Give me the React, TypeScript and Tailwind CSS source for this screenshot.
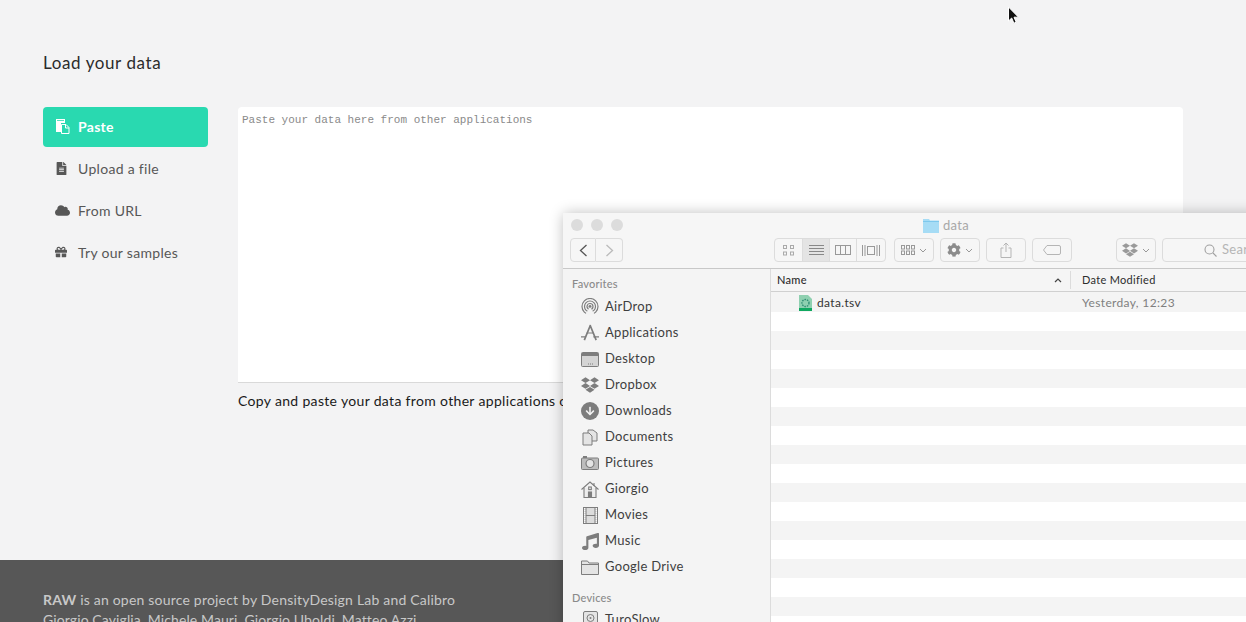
import React from "react";
import { FaFileAlt, FaCloud, FaGift, FaCog, FaDropbox, FaArrowDown, FaMusic } from "react-icons/fa";

const g = "#7d7d7d";

function PasteIcon() {
  return (
    <svg width="15" height="15" viewBox="0 0 15 15">
      <path d="M1 0h9v4H6v9H1z" fill="#fff" />
      <path d="M2 1.500h7" stroke="#29d9b0" strokeWidth=".8" />
      <path d="M6.500 5.500h4.500l3 3v6h-7.500z" fill="#29d9b0" stroke="#fff" strokeWidth="1" />
      <path d="M10.500 5.500v3.500h3.500" fill="none" stroke="#fff" strokeWidth="1" />
    </svg>
  );
}

function NavItem({ icon, label, active }: { icon: React.ReactNode; label: string; active?: boolean }) {
  return (
    <div className={active ? "flex h-10 items-center rounded-sm bg-[#29d9b0] pb-[2px] pl-[12px] font-bold text-white" : "flex h-10 items-center rounded-sm pb-[2px] pl-[12px] text-[#575757]"}>
      <span className="flex w-[23px] items-center">{icon}</span>
      <span className="text-[14px] tracking-[0.3px]">{label}</span>
    </div>
  );
}

const AirDrop = () => (
  <svg width="18" height="18" viewBox="0 0 18 18" fill="none" stroke={g} strokeWidth="1.2">
    <circle cx="9" cy="8.500" r="8" />
    <circle cx="9" cy="8.500" r="5.500" />
    <circle cx="9" cy="8.500" r="3" />
    <circle cx="9" cy="8.500" r="1" fill={g} />
    <path d="M4 17 9 9l5 8z" fill="#f3f3f3" stroke="none" />
  </svg>
);
const Apps = () => (
  <svg width="19" height="18" viewBox="0 0 19 18" fill="none" stroke={g} strokeWidth="1.8">
    <path d="M10 .5 3.500 16.500M9.500 .5 16 16.500" />
    <path d="M0 13h5M13 13h6M6 9h7" strokeWidth="1.3" />
  </svg>
);
const Desktop = () => (
  <svg width="18" height="15" viewBox="0 0 18 15">
    <rect x=".5" y=".5" width="17" height="14" rx="1" fill="#d4d4d4" stroke={g} />
    <rect x="1" y="1" width="16" height="3" fill={g} />
    <path d="M7 12h1M9 12h1M11 12h1" stroke={g} />
  </svg>
);
const Docs = () => (
  <svg width="16" height="17" viewBox="0 0 16 17" fill="#e4e4e4" stroke={g}>
    <path d="M6 1h5l4 3v8H6z" />
    <path d="M1 4h6l3 3v9H1z" />
  </svg>
);
const Camera = () => (
  <svg width="18" height="14" viewBox="0 0 18 14">
    <rect x=".5" y="2" width="17" height="11.500" rx="1" fill="#bdbdbd" stroke={g} />
    <rect x="2" y="0" width="4" height="2" fill={g} />
    <circle cx="9" cy="7.500" r="4" fill="#e4e4e4" stroke={g} strokeWidth="1.2" />
  </svg>
);
const Home = () => (
  <svg width="18" height="17" viewBox="0 0 18 17" fill="none" stroke={g} strokeWidth="1.1">
    <path d="M3 7v9.500h12V7" fill="#ededed" />
    <path d="M.5 8.500 9 1l8.500 7.500" />
    <rect x="7.500" y="11" width="3" height="5.500" fill={g} />
    <rect x="7.700" y="6" width="2.600" height="2.600" />
    <path d="M13 2v3" />
  </svg>
);
const Film = () => (
  <svg width="15" height="17" viewBox="0 0 15 17">
    <rect x=".5" y=".5" width="14" height="16" fill="#dcdcdc" stroke={g} />
    <path d="M3 0v17M12 0v17M3 8.500h9" stroke={g} />
    <path d="M1.700 1v15M13.300 1v15" stroke="#fff" strokeDasharray="1 1" />
  </svg>
);
const Folder = () => (
  <svg width="18" height="15" viewBox="0 0 18 15">
    <path d="M.5 14.500V1h6l1.500 2h9.500v11.500z" fill="#e4e4e4" stroke={g} />
    <path d="M.5 4.500h17" stroke={g} />
  </svg>
);
const Disk = () => (
  <svg width="15" height="18" viewBox="0 0 15 18">
    <rect x=".5" y=".5" width="14" height="17" rx="1.500" fill="#e4e4e4" stroke={g} />
    <circle cx="7.500" cy="7" r="3.500" fill="none" stroke={g} />
    <circle cx="7.500" cy="7" r="1" fill={g} />
  </svg>
);
const DownloadCircle = () => (
  <span className="flex h-[18px] w-[18px] items-center justify-center rounded-full bg-[#7d7d7d]">
    <FaArrowDown className="text-[10px] text-[#f3f3f3]" />
  </span>
);

const favourites: [string, React.ReactNode][] = [
  ["AirDrop", <AirDrop />],
  ["Applications", <Apps />],
  ["Desktop", <Desktop />],
  ["Dropbox", <FaDropbox className="text-[18px] text-[#7d7d7d]" />],
  ["Downloads", <DownloadCircle />],
  ["Documents", <Docs />],
  ["Pictures", <Camera />],
  ["Giorgio", <Home />],
  ["Movies", <Film />],
  ["Music", <FaMusic className="text-[17px] text-[#7d7d7d]" />],
  ["Google Drive", <Folder />],
];

function SideRow({ icon, label }: { icon: React.ReactNode; label: string }) {
  return (
    <div className="flex h-[26px] items-center pl-[18px]">
      <span className="flex w-[18px] justify-center">{icon}</span>
      <span className="ml-[6px] text-[13px] tracking-[0.3px] text-[#3f3f3f]">{label}</span>
    </div>
  );
}

function ToolBtn({ className, children }: { className?: string; children: React.ReactNode }) {
  return (
    <div className={"flex h-6 shrink-0 items-center justify-center gap-[3px] rounded-[4px] border border-[#dcdcdc] bg-[#f6f6f6] " + (className ?? "")}>
      {children}
    </div>
  );
}

const Chev = () => (
  <svg width="8" height="5" viewBox="0 0 8 5" fill="none" stroke="#999" strokeWidth="1">
    <path d="M1 1l3 3 3-3" />
  </svg>
);

function FinderWindow() {
  const rows = Array.from({ length: 18 }, (_, i) => i);
  return (
    <div className="absolute left-[563px] top-[213px] flex h-[420px] w-[700px] flex-col rounded-t-[5px] bg-[#f5f5f5] shadow-[0_0_14px_rgba(0,0,0,0.25)]">
      <div className="flex h-[56px] shrink-0 flex-col border-b border-[#c8c8c8] bg-[#f6f6f6]">
        <div className="relative flex h-[25px] shrink-0 items-center gap-2 pb-[2px] pl-[8px]">
          <span className="h-3 w-3 rounded-full bg-[#dcdcdc]" />
          <span className="h-3 w-3 rounded-full bg-[#dcdcdc]" />
          <span className="h-3 w-3 rounded-full bg-[#dcdcdc]" />
          <div className="absolute left-[360px] top-[4px] flex items-center gap-[4px]">
            <svg width="16" height="15" viewBox="0 0 16 15">
              <path d="M0 1h6l1 1.500h9V15H0z" fill="#a6dcf5" />
              <path d="M0 3.500h16" stroke="#7ec8ec" />
            </svg>
            <span className="text-[13px] leading-[16px] tracking-[0.3px] text-[#a8a8a8]">data</span>
          </div>
        </div>
        <div className="flex h-[24px] shrink-0 items-center pl-[7px]">
          <div className="flex shrink-0">
            <ToolBtn className="w-[26px] rounded-r-none">
              <svg width="9" height="13" viewBox="0 0 9 13" fill="none" stroke="#555" strokeWidth="1.3"><path d="M7.500 1 1.500 6.500l6 5.500" /></svg>
            </ToolBtn>
            <ToolBtn className="w-[27px] rounded-l-none border-l-0">
              <svg width="9" height="13" viewBox="0 0 9 13" fill="none" stroke="#bbb" strokeWidth="1.3"><path d="M1.500 1l6 5.500-6 5.500" /></svg>
            </ToolBtn>
          </div>
          <div className="ml-[151px] flex h-6 w-[112px] shrink-0 overflow-hidden rounded-[4px] border border-[#dcdcdc] bg-[#f6f6f6]">
            <div className="flex w-[28px] items-center justify-center border-r border-[#dcdcdc]">
              <svg width="11" height="11" viewBox="0 0 11 11" fill="none" stroke="#aaa"><rect x=".5" y=".5" width="3" height="3" /><rect x="7.500" y=".5" width="3" height="3" /><rect x=".5" y="7" width="3" height="3" /><rect x="7.500" y="7" width="3" height="3" /></svg>
            </div>
            <div className="flex w-[27px] items-center justify-center border-r border-[#dcdcdc] bg-[#e4e4e4]">
              <svg width="15" height="11" viewBox="0 0 15 11" stroke="#888"><path d="M0 .5h15M0 3.500h15M0 6.500h15M0 9.500h15" /></svg>
            </div>
            <div className="flex w-[27px] items-center justify-center border-r border-[#dcdcdc]">
              <svg width="16" height="10" viewBox="0 0 16 10" fill="none" stroke="#999"><rect x=".5" y=".5" width="15" height="9" /><path d="M5.500 0v10M10.500 0v10" /></svg>
            </div>
            <div className="flex flex-1 items-center justify-center">
              <svg width="18" height="11" viewBox="0 0 18 11" fill="none" stroke="#999"><rect x="5.500" y="1.500" width="7" height="8" /><path d="M.5 0v11M3 0v11M15 0v11M17.500 0v11" /></svg>
            </div>
          </div>
          <ToolBtn className="ml-[8px] w-[40px] gap-[4px]">
            <svg width="14" height="10" viewBox="0 0 14 10" fill="none" stroke="#999"><rect x=".5" y=".5" width="3" height="3.500" /><rect x="5.500" y=".5" width="3" height="3.500" /><rect x="10.500" y=".5" width="3" height="3.500" /><rect x=".5" y="6" width="3" height="3.500" /><rect x="5.500" y="6" width="3" height="3.500" /><rect x="10.500" y="6" width="3" height="3.500" /></svg>
            <Chev />
          </ToolBtn>
          <ToolBtn className="ml-[6px] w-[40px] gap-[4px]">
            <FaCog className="text-[14px] text-[#8c8c8c]" />
            <Chev />
          </ToolBtn>
          <ToolBtn className="ml-[6px] w-[40px]">
            <svg width="12" height="16" viewBox="0 0 12 16" fill="none" stroke="#b5b5b5"><path d="M3.500 6H1v9.500h10V6H8.500M6 10V1M3.500 3.500 6 1l2.500 2.500" /></svg>
          </ToolBtn>
          <ToolBtn className="ml-[6px] w-[40px]">
            <svg width="18" height="10" viewBox="0 0 18 10" fill="none" stroke="#b5b5b5"><path d="M4 .5h12a1.500 1.500 0 0 1 1.500 1.500v6a1.500 1.500 0 0 1-1.500 1.500H4L.5 5z" /></svg>
          </ToolBtn>
          <ToolBtn className="ml-[44px] w-[40px] gap-[4px]">
            <FaDropbox className="text-[16px] text-[#9a9a9a]" />
            <Chev />
          </ToolBtn>
          <ToolBtn className="ml-[6px] w-[130px] justify-start pl-[41px]">
            <svg width="13" height="13" viewBox="0 0 13 13" fill="none" stroke="#a0a0a0" strokeWidth="1.1"><circle cx="5.500" cy="5.500" r="4.500" /><path d="M9 9l3.500 3.500" /></svg>
            <span className="ml-[2px] text-[13px] tracking-[0.3px] text-[#b5b5b5]">Search</span>
          </ToolBtn>
        </div>
      </div>
      <div className="flex min-h-0 flex-1">
        <div className="w-[208px] shrink-0 overflow-hidden border-r border-[#dcdcdc] bg-[#f4f4f4]">
          <div className="pb-[4px] pl-[9px] pt-[8px] text-[11px] font-medium leading-[13px] tracking-[0.2px] text-[#8a8a8a]">Favorites</div>
          {favourites.map(([label, icon]) => (
            <SideRow key={label} icon={icon} label={label} />
          ))}
          <div className="pb-[3px] pl-[9px] pt-[11px] text-[11px] font-medium leading-[13px] tracking-[0.2px] text-[#8a8a8a]">Devices</div>
          <SideRow icon={<Disk />} label="TuroSlow" />
        </div>
        <div className="min-w-0 flex-1 overflow-hidden bg-white">
          <div className="flex h-[23px] items-center border-b border-[#d0d0d0] bg-[#f5f5f5] text-[11px] tracking-[0.3px] text-[#2d2d2d]">
            <div className="flex h-[18px] w-[300px] items-center justify-between border-r border-[#dcdcdc] pl-[6px] pr-[8px] font-medium">
              <span>Name</span>
              <svg width="8" height="5" viewBox="0 0 8 5" fill="none" stroke="#444" strokeWidth="1.2"><path d="M1 4l3-3 3 3" /></svg>
            </div>
            <span className="pl-[11px]">Date Modified</span>
          </div>
          <div className="flex h-[20px] items-center bg-[#f4f4f4] pt-[1px] text-[12px] tracking-[0.35px]">
            <div className="flex w-[300px] items-center pl-[28px] text-[#333]">
              <svg width="13" height="16" viewBox="0 0 13 16">
                <path d="M0 0h9l4 4v12H0z" fill="#8fd0b0" />
                <path d="M0 13h13v3H0z" fill="#10a860" />
                <circle cx="6.500" cy="8" r="3.500" fill="none" stroke="#2c8a70" strokeWidth="1.3" strokeDasharray="1.500 1" />
              </svg>
              <span className="ml-[5px]">data.tsv</span>
            </div>
            <span className="pl-[11px] text-[#7f7f7f]">Yesterday, 12:23</span>
          </div>
          {rows.map((i) => (
            <div key={i} className={i % 2 === 0 ? "h-[19px] bg-white" : "h-[19px] bg-[#f4f4f4]"} />
          ))}
        </div>
      </div>
    </div>
  );
}

export default function App() {
  return (
    <div className="relative h-[622px] w-[1246px] overflow-hidden bg-[#f3f3f4] font-['Lato','Noto_Sans',sans-serif]">
      <div className="h-[560px] px-[43px]">
        <h1 className="pt-[52px] text-[17px] leading-[22px] tracking-[0.6px] text-[#2b2b2b]">Load your data</h1>
        <div className="mt-[33px] flex gap-[30px]">
          <div className="flex w-[165px] shrink-0 flex-col gap-[2px]">
            <NavItem active icon={<PasteIcon />} label="Paste" />
            <NavItem icon={<FaFileAlt className="text-[13px]" />} label="Upload a file" />
            <NavItem icon={<FaCloud className="text-[15px]" />} label="From URL" />
            <NavItem icon={<FaGift className="text-[12px]" />} label="Try our samples" />
          </div>
          <div className="w-[945px]">
            <div className="h-[276px] rounded-t-sm border-b border-[#d9d9d9] bg-white px-1 pt-[7px] font-['Liberation_Mono',monospace] text-[11px] leading-[13px] text-[#8a8a8a]">
              Paste your data here from other applications
            </div>
            <p className="mt-[9px] w-[325px] overflow-hidden whitespace-nowrap text-[14px] leading-[18px] tracking-[0.33px] text-[#1a1a1a]">
              Copy and paste your data from other applications or
            </p>
          </div>
        </div>
      </div>
      <div className="h-[62px] bg-[#575757] px-[43px] pt-[30px] text-[14px] leading-[20px] tracking-[0.2px] text-[#c8c8c8]">
        <p><b>RAW</b> is an open source project by DensityDesign Lab and Calibro</p>
        <p className="tracking-[0.1px]">Giorgio Caviglia, Michele Mauri, Giorgio Uboldi, Matteo Azzi</p>
      </div>
      <FinderWindow />
      <svg className="absolute left-[1007px] top-[6px]" width="13" height="19" viewBox="0 0 13 19">
        <path d="M1.500 1v14l3.200-3 2.200 5.200 2.300-1-2.200-5h4.500z" fill="#111" stroke="#fff" strokeWidth="1" />
      </svg>
    </div>
  );
}
